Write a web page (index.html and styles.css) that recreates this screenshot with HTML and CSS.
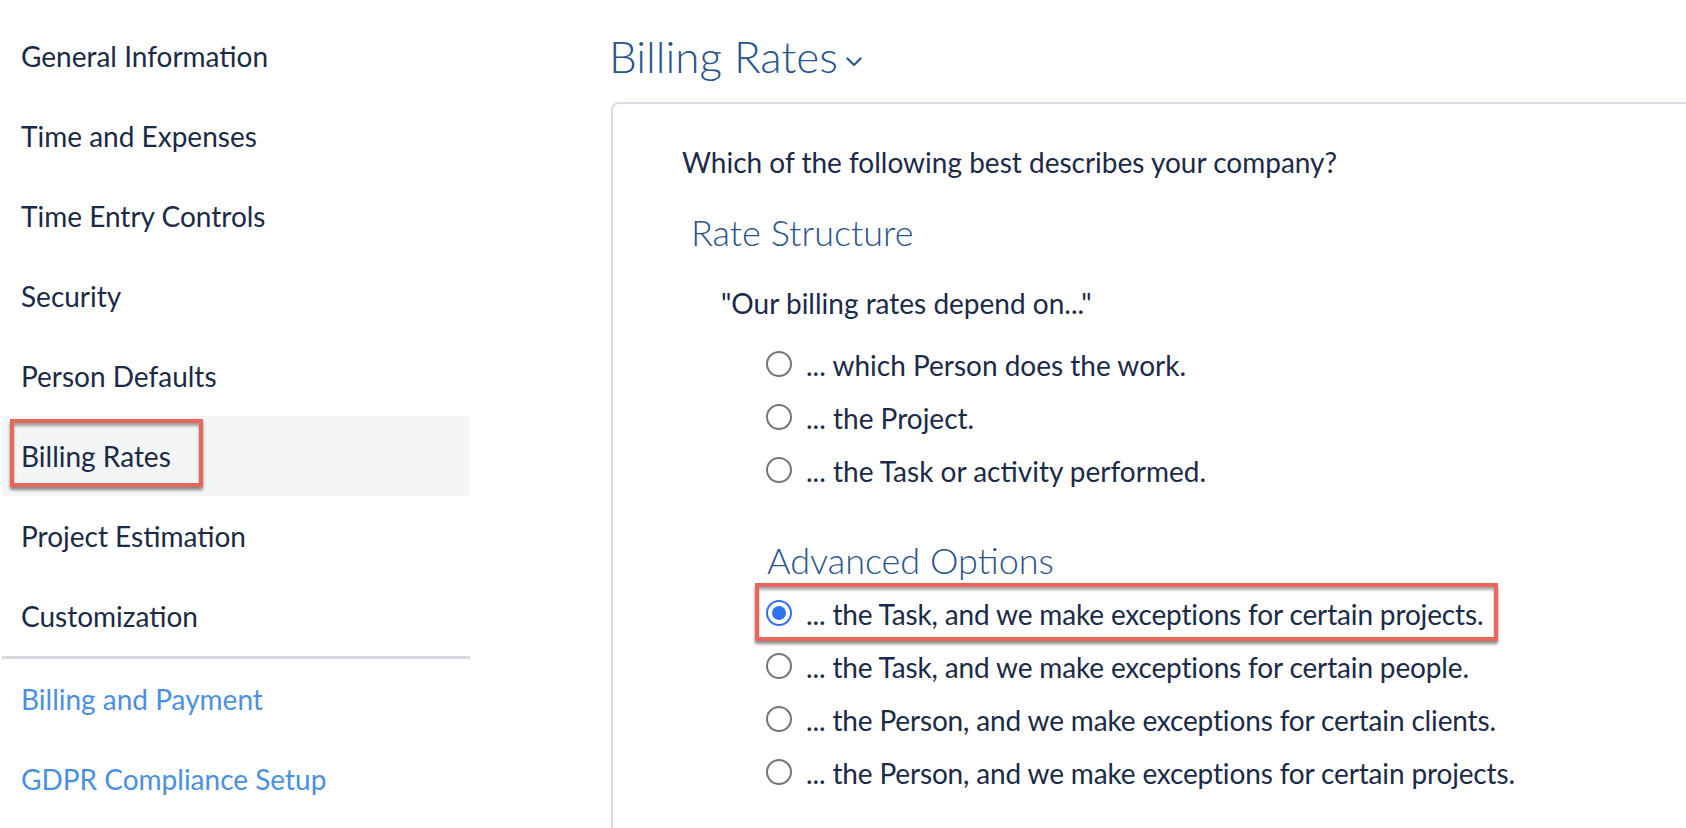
FILE: index.html
```html
<!DOCTYPE html>
<html lang="en">
<head>
<meta charset="utf-8">
<title>Billing Rates</title>
<link rel="stylesheet" href="styles.css">
</head>
<body>
<div class="layout">
  <nav class="sidebar">
    <ul class="nav-list">
      <li class="nav-item">General Information</li>
      <li class="nav-item">Time and Expenses</li>
      <li class="nav-item">Time Entry Controls</li>
      <li class="nav-item">Security</li>
      <li class="nav-item">Person Defaults</li>
      <li class="nav-item active">Billing Rates</li>
      <li class="nav-item">Project Estimation</li>
      <li class="nav-item">Customization</li>
    </ul>
    <div class="nav-divider"></div>
    <ul class="nav-list">
      <li class="nav-item link">Billing and Payment</li>
      <li class="nav-item link">GDPR Compliance Setup</li>
    </ul>
  </nav>
  <main class="main">
    <h1 class="page-title">Billing Rates<svg class="chevron" width="16" height="10" viewBox="0 0 16 10"><path d="M1.5 1.5 L8 8 L14.5 1.5" fill="none" stroke="#2a5591" stroke-width="2.2" stroke-linecap="round" stroke-linejoin="round"/></svg></h1>
    <section class="card">
      <p class="question">Which of the following best describes your company?</p>
      <h2 class="section-title">Rate Structure</h2>
      <p class="quote">"Our billing rates depend on..."</p>
      <ul class="options">
        <li class="option"><span class="radio"></span><span class="option-text">... which Person does the work.</span></li>
        <li class="option"><span class="radio"></span><span class="option-text">... the Project.</span></li>
        <li class="option"><span class="radio"></span><span class="option-text">... the Task or activity performed.</span></li>
      </ul>
      <h2 class="section-title advanced-title">Advanced Options</h2>
      <ul class="options advanced">
        <li class="option highlighted"><span class="radio checked"></span><span class="option-text">... the Task, and we make exceptions for certain projects.</span></li>
        <li class="option"><span class="radio"></span><span class="option-text">... the Task, and we make exceptions for certain people.</span></li>
        <li class="option"><span class="radio"></span><span class="option-text">... the Person, and we make exceptions for certain clients.</span></li>
        <li class="option"><span class="radio"></span><span class="option-text">... the Person, and we make exceptions for certain projects.</span></li>
      </ul>
    </section>
  </main>
</div>
</body>
</html>
```

FILE: styles.css
```css
html, body {
  margin: 0;
  padding: 0;
  background: #ffffff;
  overflow: hidden;
  height: 100%;
}

body {
  font-family: Lato, "Open Sans", "Liberation Sans", sans-serif;
  color: #1b2a48;
}

.layout {
  display: flex;
  align-items: flex-start;
  width: 100%;
}

.sidebar {
  width: 468px;
  margin-left: 2px;
  padding-top: 16px;
  flex-shrink: 0;
}

.nav-list {
  list-style: none;
  margin: 0;
  padding: 0;
}

.nav-item {
  position: relative;
  height: 80px;
  line-height: 80px;
  padding-left: 19px;
  font-size: 28px;
  color: #1b2a48;
  white-space: nowrap;
}

.nav-item.active {
  background: #f4f5f7;
}

.nav-item.active::after {
  content: "";
  position: absolute;
  left: 8px;
  top: 3px;
  width: 193px;
  height: 68px;
  box-sizing: border-box;
  border: 4px solid #e8665a;
  box-shadow: 0 3px 3px rgba(0, 0, 0, 0.45), inset 0 3px 3px rgba(0, 0, 0, 0.35);
}

.nav-item.link {
  color: #4a90e2;
}

.nav-divider {
  height: 3px;
  background: #d6dbe1;
}

.main {
  flex: 1;
  min-width: 0;
  margin-left: 141px;
  padding-top: 30px;
}

.page-title {
  display: flex;
  align-items: center;
  margin: 0 0 0 -2px;
  height: 53px;
  line-height: 53px;
  font-size: 44px;
  font-weight: 300;
  color: #27548f;
  white-space: nowrap;
}

.chevron {
  margin-left: 8px;
  margin-top: 10px;
}

.card {
  margin-top: 19px;
  margin-right: -40px;
  border: 2px solid #d8dce3;
  border-radius: 8px;
  padding: 41px 0 80px 69px;
  min-height: 900px;
}

.question {
  margin: 0;
  font-size: 28px;
  line-height: 34px;
  white-space: nowrap;
}

.section-title {
  margin: 31px 0 0 9px;
  font-size: 36px;
  line-height: 44px;
  font-weight: 300;
  color: #27548f;
  white-space: nowrap;
}

.quote {
  margin: 32px 0 0 39px;
  font-size: 28px;
  line-height: 34px;
  white-space: nowrap;
}

.options {
  list-style: none;
  margin: 17px 0 0 84px;
  padding: 0;
}

.option {
  position: relative;
  display: flex;
  align-items: center;
  height: 53px;
  font-size: 28px;
  white-space: nowrap;
}

.option-text {
  margin-left: 14px;
  padding-top: 3px;
}

.options.advanced .option-text {
  letter-spacing: -0.15px;
}

.radio {
  width: 26px;
  height: 26px;
  box-sizing: border-box;
  border: 2px solid #767676;
  border-radius: 50%;
  background: #ffffff;
  flex-shrink: 0;
  display: flex;
  align-items: center;
  justify-content: center;
}

.radio.checked {
  border-color: #3071ee;
}

.radio.checked::after {
  content: "";
  width: 14px;
  height: 14px;
  border-radius: 50%;
  background: #3071ee;
}

.advanced-title {
  margin: 42px 0 0 85px;
}

.options.advanced {
  margin-top: 4px;
}

.option.highlighted::after {
  content: "";
  position: absolute;
  left: -11px;
  top: -3px;
  width: 743px;
  height: 58px;
  box-sizing: border-box;
  border: 4px solid #e8665a;
  box-shadow: 0 3px 3px rgba(0, 0, 0, 0.45), inset 0 3px 3px rgba(0, 0, 0, 0.35);
}
```
